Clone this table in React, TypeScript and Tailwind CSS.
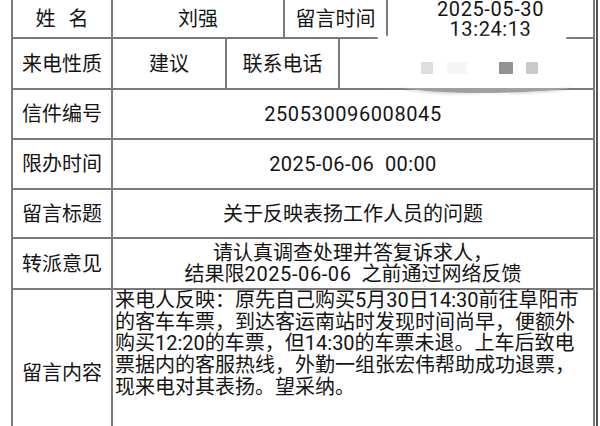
export default function App() {
  const cell = "flex items-center justify-center border-r-2 border-[#7a7a7a] shrink-0";
  const row = "flex shrink-0 border-b-2 border-[#7a7a7a]";

  return (
    <div
      className="relative w-[600px] h-[426px] overflow-hidden bg-white text-[20px] text-[#141414]"
      style={{ fontFamily: "Roboto, 'Noto Sans CJK SC', sans-serif" }}
    >
      <div className="flex h-full">
        <div className="ml-[11px] w-[584px] flex flex-col border-l-2 border-r-2 border-[#7a7a7a]">
          {/* 姓名 / 留言时间 */}
          <div className={`${row} h-[39px]`}>
            <div className={`${cell} w-[100px]`}>
              <span>姓</span>
              <span className="ml-[13px]">名</span>
            </div>
            <div className={`${cell} w-[172px]`}>刘强</div>
            <div className={`${cell} w-[103px]`}>留言时间</div>
            <div className="flex-1 flex flex-col items-center justify-center leading-[20px] tracking-[0.6px]">
              <span>2025-05-30</span>
              <span>13:24:13</span>
            </div>
          </div>

          {/* 来电性质 / 联系电话 */}
          <div className={`${row} h-[51px]`}>
            <div className={`${cell} w-[100px]`}>来电性质</div>
            <div className={`${cell} w-[114px]`}>建议</div>
            <div className={`${cell} w-[113px]`}>联系电话</div>
            <div className="flex-1" />
          </div>

          <div className={`${row} h-[50px]`}>
            <div className={`${cell} w-[100px]`}>信件编号</div>
            <div className="flex-1 flex items-center justify-center tracking-[0.6px]">250530096008045</div>
          </div>

          <div className={`${row} h-[50px]`}>
            <div className={`${cell} w-[100px]`}>限办时间</div>
            <div className="flex-1 flex items-center justify-center whitespace-pre tracking-[0.4px]">2025-06-06  00:00</div>
          </div>

          <div className={`${row} h-[49px]`}>
            <div className={`${cell} w-[100px]`}>留言标题</div>
            <div className="flex-1 flex items-center justify-center">关于反映表扬工作人员的问题</div>
          </div>

          <div className={`${row} h-[51px]`}>
            <div className={`${cell} w-[100px]`}>转派意见</div>
            <div className="flex-1 flex flex-col items-center justify-center leading-[21px]">
              <span>请认真调查处理并答复诉求人，</span>
              <span className="whitespace-pre">
                结果限<span className="tracking-[0.6px]">2025-06-06</span>  之前通过网络反馈
              </span>
            </div>
          </div>

          <div className="flex h-[166px] shrink-0">
            <div className={`${cell} w-[100px]`}>留言内容</div>
            <div className="flex-1 pl-[2px] pr-[6px] leading-[21.7px]">
              来电人反映：原先自己购买5月30日14:30前往阜阳市的客车车票，到达客运南站时发现时间尚早，便额外购买12:20的车票，但14:30的车票未退。上车后致电票据内的客服热线，外勤一组张宏伟帮助成功退票，现来电对其表扬。望采纳。
            </div>
          </div>
        </div>
        <div className="ml-[1px] w-[2px] bg-[#555] self-stretch shrink-0" />
      </div>

      {/* blurred phone number smudge */}
      <svg className="absolute left-[360px] top-[30px]" width="230" height="70" viewBox="0 0 230 70">
        <defs>
          <filter id="soft" x="-20%" y="-20%" width="140%" height="140%">
            <feGaussianBlur stdDeviation="2.5" />
          </filter>
          <filter id="soft2" x="-20%" y="-50%" width="140%" height="200%">
            <feGaussianBlur stdDeviation="1.2" />
          </filter>
        </defs>
        <rect x="16" y="8" width="192" height="46" rx="8" fill="#ffffff" filter="url(#soft)" />
        <rect x="18" y="6" width="188" height="50" fill="#ffffff" />
        <rect x="61" y="32" width="12" height="12" fill="#dedede" />
        <rect x="87" y="32" width="20" height="12" fill="#f5f5f5" />
        <rect x="139" y="32" width="14" height="12" fill="#939393" />
        <rect x="166" y="32" width="12" height="12" fill="#cacaca" />
        <path d="M38 58 C 80 65, 150 66, 212 58 C 200 62, 150 64, 120 64 C 90 64, 60 63, 38 58 Z" fill="#8d8d8d" filter="url(#soft2)" />
        <path d="M42 58 L 210 58 C 198 61, 150 63, 120 63 C 90 63, 60 61, 42 58 Z" fill="#a0a0a0" />
      </svg>
    </div>
  );
}
